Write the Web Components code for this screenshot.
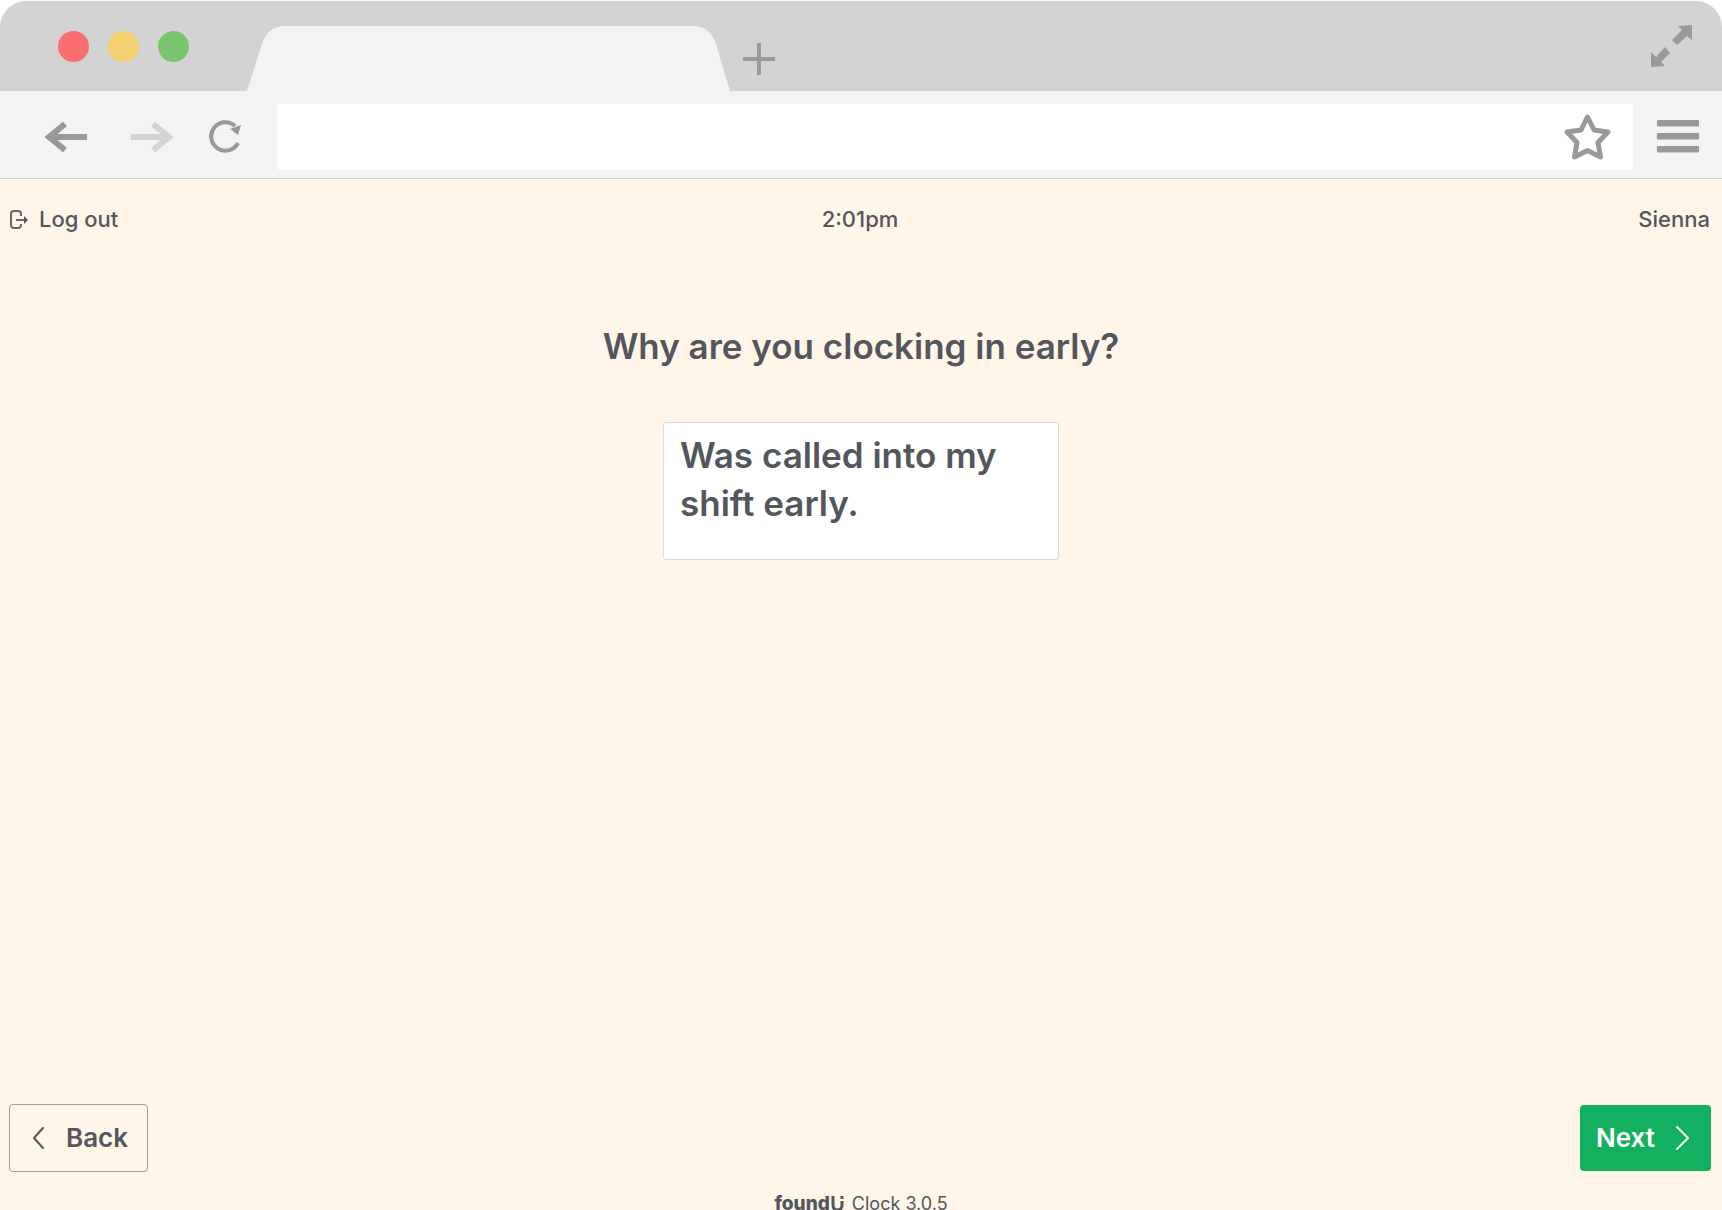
<!DOCTYPE html>
<html lang="en">
<head>
<meta charset="utf-8">
<meta name="viewport" content="width=device-width, initial-scale=1">
<title>Clock</title>
<style>
    html {
        height: 100%;
        overflow: hidden;
        background: #ffffff;
    }

    body {
        height: 100%;
        margin: 0;
        font-family: Inter, "Liberation Sans", sans-serif;
        color: #53565c;
    }
</style>
</head>
<body>
<browser-window>
    <clock-app>
        <clock-header slot="header" user="Sienna" time="2:01pm"></clock-header>
        <clock-question answer="Was called into my shift early.">Why are you clocking in early?</clock-question>
        <clock-button slot="actions" kind="back">Back</clock-button>
        <clock-button slot="actions" kind="next">Next</clock-button>
        <clock-version slot="footer">Clock 3.0.5</clock-version>
    </clock-app>
</browser-window>

<script>
// Browser window: tab strip, toolbar and the page below
class BrowserWindow extends HTMLElement {
    constructor() {
        super();
        this.attachShadow({ mode: 'open' });
    }

    connectedCallback() {
        this.shadowRoot.innerHTML = `
        <style>
            :host {
                display: flex;
                flex-direction: column;
                height: 100%;
                padding-top: 1px;
                box-sizing: border-box;
            }
        </style>
        <browser-tabs></browser-tabs>
        <browser-toolbar></browser-toolbar>
        <slot></slot>
    `;
    }
}

// Grey strip with the window lights and one open tab
class BrowserTabs extends HTMLElement {
    constructor() {
        super();
        this.attachShadow({ mode: 'open' });
    }

    connectedCallback() {
        this.shadowRoot.innerHTML = `
        <style>
            :host {
                display: flex;
                align-items: center;
                flex: none;
                height: 90px;
                box-sizing: border-box;
                padding: 0 29px 0 58px;
                background: #d3d3d3;
                border-radius: 26px 26px 0 0;
            }

            button {
                display: block;
                border: 0;
                padding: 0;
                background: none;
            }

            svg {
                display: block;
            }

            .lights {
                display: flex;
                gap: 19px;
            }

            .lights button {
                width: 31px;
                height: 31px;
                border-radius: 50%;
            }

            .close { background: #fb6e70; }
            .minimise { background: #f3d070; }
            .zoom { background: #79c56d; }

            .tabs {
                display: flex;
                align-items: center;
                align-self: flex-end;
                gap: 13px;
                margin-left: 58px;
            }

            .fullscreen {
                margin-left: auto;
            }
        </style>
        <div class="lights">
            <button class="close" aria-label="Close window"></button>
            <button class="minimise" aria-label="Minimise window"></button>
            <button class="zoom" aria-label="Zoom window"></button>
        </div>
        <div class="tabs">
            <button aria-label="Current tab">
                <svg width="483" height="65" viewBox="0 0 483 65">
                    <path fill="#f3f3f3" d="M0 65L15 18Q21 0 38 0H446Q463 0 469 18L483 65Z"/>
                </svg>
            </button>
            <button aria-label="New tab">
                <svg width="32" height="32" viewBox="0 0 32 32">
                    <path d="M16 0V32M0 16H32" stroke="#999999" stroke-width="4"/>
                </svg>
            </button>
        </div>
        <button class="fullscreen" aria-label="Full screen">
            <svg width="43" height="43" viewBox="0 0 43 43" fill="#999999">
                <path d="M28 1L42 0L42 15L37 11L27 20L22 15L32 5Z"/>
                <path d="M1 27L6 32L15 22L20 28L11 37L15 41L1 42Z"/>
            </svg>
        </button>
    `;
    }
}

// Navigation buttons, address box and menu
class BrowserToolbar extends HTMLElement {
    constructor() {
        super();
        this.attachShadow({ mode: 'open' });
    }

    connectedCallback() {
        this.shadowRoot.innerHTML = `
        <style>
            :host {
                display: flex;
                align-items: center;
                flex: none;
                height: 88px;
                box-sizing: border-box;
                padding: 4px 23px 0 23px;
                background: #f3f3f3;
                border-bottom: 1px solid #d2d0d3;
            }

            button {
                display: flex;
                justify-content: center;
                border: 0;
                padding: 0;
                background: none;
            }

            svg {
                display: block;
            }

            nav {
                display: grid;
                grid-template-columns: 86px 86px 60px;
                align-items: center;
            }

            .address {
                display: flex;
                align-items: center;
                flex: 1;
                height: 66px;
                box-sizing: border-box;
                margin: 0 24px 0 22px;
                padding-right: 22px;
                background: #ffffff;
                border-radius: 4px;
            }

            input {
                flex: 1;
                min-width: 0;
                height: 100%;
                box-sizing: border-box;
                border: 0;
                padding: 0 16px;
                background: none;
                font: inherit;
                font-size: 24px;
                outline: none;
            }
        </style>
        <nav>
            <button aria-label="Go back">
                <svg width="42" height="30" viewBox="0 0 42 30">
                    <path d="M20 2L4 15L20 28M4 15H42" fill="none" stroke="#999999" stroke-width="6"/>
                    <path d="M0 15L6 10V20Z" fill="#999999"/>
                </svg>
            </button>
            <button aria-label="Go forward">
                <svg width="42" height="30" viewBox="0 0 42 30">
                    <path d="M22 2L38 15L22 28M38 15H0" fill="none" stroke="#d3d3d3" stroke-width="6"/>
                    <path d="M42 15L36 10V20Z" fill="#d3d3d3"/>
                </svg>
            </button>
            <button aria-label="Reload">
                <svg width="33" height="33" viewBox="0 0 33 33">
                    <path d="M29 23A14.2 14.2 0 1 1 26 6" fill="none" stroke="#999999" stroke-width="4"/>
                    <path d="M21 9L32 5L29 15Z" fill="#999999"/>
                </svg>
            </button>
        </nav>
        <div class="address">
            <input type="text" aria-label="Address">
            <button aria-label="Bookmark this page">
                <svg width="47" height="46" viewBox="0 0 47 46">
                    <path d="M23.500 3L30 16L44 18L34 28.500L36.500 43L23.500 36.500L10.500 43L13 28.500L3 18L17 16Z" fill="none" stroke="#999999" stroke-width="5" stroke-linejoin="round"/>
                </svg>
            </button>
        </div>
        <button aria-label="Menu">
            <svg width="42" height="33" viewBox="0 0 42 33" fill="#999999">
                <rect width="42" height="6.500" rx="1"/>
                <rect y="13" width="42" height="6.500" rx="1"/>
                <rect y="26" width="42" height="6.500" rx="1"/>
            </svg>
        </button>
    `;
    }
}

// Page layout of the clock: header, question, actions, version
class ClockApp extends HTMLElement {
    constructor() {
        super();
        this.attachShadow({ mode: 'open' });
    }

    connectedCallback() {
        this.shadowRoot.innerHTML = `
        <style>
            :host {
                display: flex;
                flex-direction: column;
                flex: 1;
                min-height: 0;
                background: #fff5e8;
            }

            main {
                flex: 1;
                padding: 62px 16px 24px;
            }

            .actions {
                display: flex;
                justify-content: space-between;
                align-items: center;
                padding: 0 11px 0 9px;
            }

            /* The last line runs a little below the window */
            footer {
                height: 38px;
                box-sizing: border-box;
                padding-top: 20px;
            }
        </style>
        <slot name="header"></slot>
        <main><slot></slot></main>
        <div class="actions"><slot name="actions"></slot></div>
        <footer><slot name="footer"></slot></footer>
    `;
    }
}

// Top line: log out, time and user name
class ClockHeader extends HTMLElement {
    constructor() {
        super();
        this.attachShadow({ mode: 'open' });
    }

    connectedCallback() {
        const user = this.getAttribute('user');
        const time = this.getAttribute('time');

        this.shadowRoot.innerHTML = `
        <style>
            :host {
                display: grid;
                grid-template-columns: 1fr auto 1fr;
                align-items: center;
                flex: none;
                height: 81px;
                box-sizing: border-box;
                padding: 0 12px 0 10px;
                border-bottom: 1px solid #fdf3e6;
                font-size: 22px;
                font-weight: 500;
                line-height: 28px;
            }

            a {
                display: flex;
                align-items: center;
                justify-self: start;
                gap: 10px;
                color: inherit;
                text-decoration: none;
            }

            .user {
                justify-self: end;
            }
        </style>
        <a href="#logout">
            <svg width="19" height="19" viewBox="0 0 19 19" fill="none" stroke="#6a6a6c" stroke-width="2">
                <path d="M11 6V4Q11 1 8 1H4Q1 1 1 4V15Q1 18 4 18H8Q11 18 11 15V14"/>
                <path d="M6 10H17"/>
                <path d="M14 6L18 10L14 14Z" fill="#53565c" stroke="none"/>
            </svg>
            <span>Log out</span>
        </a>
        <time>${time}</time>
        <span class="user">${user}</span>
    `;
    }
}

// Question with a free text answer
class ClockQuestion extends HTMLElement {
    constructor() {
        super();
        this.attachShadow({ mode: 'open' });
    }

    connectedCallback() {
        const answer = this.getAttribute('answer');

        this.shadowRoot.innerHTML = `
        <style>
            :host {
                display: flex;
                flex-direction: column;
                align-items: center;
                gap: 52px;
                font-size: 35px;
                font-weight: 600;
                line-height: 48px;
            }

            h1 {
                margin: 0;
                font: inherit;
                text-align: center;
            }

            textarea {
                display: block;
                width: 396px;
                max-width: 100%;
                height: 138px;
                box-sizing: border-box;
                margin: 0;
                padding: 8px 16px;
                border: 1px solid #d9dadd;
                border-radius: 3px;
                background: #ffffff;
                color: inherit;
                font: inherit;
                resize: none;
                overflow: hidden;
                outline: none;
            }
        </style>
        <h1><label for="answer"><slot></slot></label></h1>
        <textarea id="answer">${answer}</textarea>
    `;
    }
}

// Back and next buttons, the chevron is on the side of the movement
class ClockButton extends HTMLElement {
    constructor() {
        super();
        this.attachShadow({ mode: 'open' });
    }

    connectedCallback() {
        const kind = this.getAttribute('kind');
        const back = '<svg width="13" height="22" viewBox="0 0 13 22"><path d="M11 1L2 11L11 21"/></svg>';
        const next = '<svg width="13" height="24" viewBox="0 0 13 24"><path d="M1 1L12 12L1 23"/></svg>';

        this.shadowRoot.innerHTML = `
        <style>
            :host {
                display: block;
            }

            button {
                display: flex;
                align-items: center;
                gap: 21px;
                box-sizing: border-box;
                border: 0;
                border-radius: 4px;
                font: inherit;
                font-size: 26px;
                font-weight: 600;
                line-height: 36px;
            }

            .back {
                min-width: 139px;
                padding: 15px 16px 15px 22px;
                border: 1px solid #a19d98;
                background: none;
                color: #53565c;
            }

            .next {
                min-width: 131px;
                padding: 15px 21px 15px 16px;
                background: #12b05f;
                color: #ffffff;
            }

            svg {
                fill: none;
                stroke: currentColor;
                stroke-width: 2;
                stroke-linecap: round;
                stroke-linejoin: round;
            }
        </style>
        <button class="${kind}">
            ${kind === 'back' ? back : ''}<span><slot></slot></span>${kind === 'next' ? next : ''}
        </button>
    `;
    }
}

// Product logo and version
class ClockVersion extends HTMLElement {
    constructor() {
        super();
        this.attachShadow({ mode: 'open' });
    }

    connectedCallback() {
        this.shadowRoot.innerHTML = `
        <style>
            :host {
                display: flex;
                justify-content: center;
                align-items: center;
                gap: 8px;
                font-size: 18px;
                line-height: 24px;
            }

            .logo {
                display: flex;
                align-items: center;
                gap: 1px;
                font-size: 19px;
                font-weight: 800;
            }
        </style>
        <span class="logo">
            <span>found</span>
            <svg width="13" height="16" viewBox="0 0 13 16" fill="none" stroke="#53565c" stroke-width="3">
                <path d="M2 0V8Q2 14 6 14Q11 14 11 9V5"/>
                <path d="M11 0V3"/>
            </svg>
        </span>
        <span><slot></slot></span>
    `;
    }
}

customElements.define('browser-window', BrowserWindow);
customElements.define('browser-tabs', BrowserTabs);
customElements.define('browser-toolbar', BrowserToolbar);
customElements.define('clock-app', ClockApp);
customElements.define('clock-header', ClockHeader);
customElements.define('clock-question', ClockQuestion);
customElements.define('clock-button', ClockButton);
customElements.define('clock-version', ClockVersion);
</script>
</body>
</html>
